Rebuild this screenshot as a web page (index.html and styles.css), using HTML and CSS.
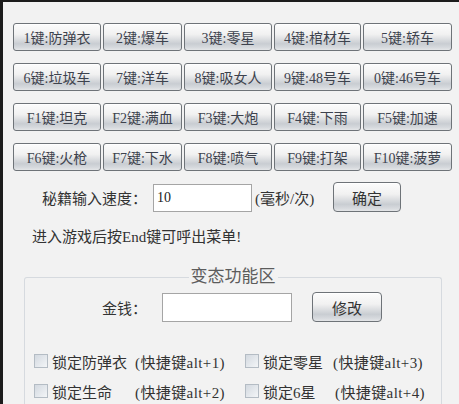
FILE: index.html
```html
<!doctype html>
<html>
<head>
<meta charset="utf-8">
<title>秘籍</title>
<link rel="stylesheet" href="styles.css">
</head>
<body>

<div class="window">

<div class="keys">
<button class="key">1键:防弹衣</button>
<button class="key">2键:爆车</button>
<button class="key">3键:零星</button>
<button class="key">4键:棺材车</button>
<button class="key">5键:轿车</button>
<button class="key">6键:垃圾车</button>
<button class="key">7键:洋车</button>
<button class="key">8键:吸女人</button>
<button class="key">9键:48号车</button>
<button class="key">0键:46号车</button>
<button class="key">F1键:坦克</button>
<button class="key">F2键:满血</button>
<button class="key">F3键:大炮</button>
<button class="key">F4键:下雨</button>
<button class="key">F5键:加速</button>
<button class="key">F6键:火枪</button>
<button class="key">F7键:下水</button>
<button class="key">F8键:喷气</button>
<button class="key">F9键:打架</button>
<button class="key">F10键:菠萝</button>
</div>

<div class="speed-row">
<span class="speed-label">秘籍输入速度：</span>
<input class="text-box speed-box" type="text" value="10">
<span class="speed-unit">(毫秒/次)</span>
<button class="action">确定</button>
</div>

<div class="hint">进入游戏后按End键可呼出菜单!</div>

<fieldset class="group">
<legend class="group-title">变态功能区</legend>

<div class="money-row">
<span class="money-label">金钱：</span>
<input class="text-box money-box" type="text" value="">
<button class="action money-button">修改</button>
</div>

<div class="locks">
<label class="lock"><span class="check"></span>锁定防弹衣</label>
<span class="shortcut">(快捷键alt+1)</span>
<label class="lock"><span class="check"></span>锁定零星</label>
<span class="shortcut">(快捷键alt+3)</span>
<label class="lock"><span class="check"></span>锁定生命</label>
<span class="shortcut">(快捷键alt+2)</span>
<label class="lock"><span class="check"></span>锁定6星</label>
<span class="shortcut shortcut-late">(快捷键alt+4)</span>
</div>

</fieldset>

</div>

</body>
</html>
```

FILE: styles.css
```css
html, body {
	margin: 0;
	height: 404px;
	overflow: hidden;
}

body {
	font-family: "Liberation Serif", "Noto Sans CJK SC", sans-serif;
	background: #f2f2f2;
	color: #333333;
}

div.window {
	box-sizing: border-box;
	height: 404px;
	overflow: hidden;
	border-top: solid 2px #1c1c1c;
	border-left: solid 3px #1c1c1c;
	padding: 21px 0 0 10px;
	background: #f2f2f2;
}

/* the twenty cheat buttons */
div.keys {
	display: grid;
	grid-template-columns: 88px 79px 88px 87px 89px;
	grid-auto-rows: 28px;
	column-gap: 2px;
	row-gap: 12px;
}

button.key, button.action {
	margin: 0;
	padding: 0;
	border: solid 1px #6e7378;
	border-radius: 3px;
	background: linear-gradient(#fcfcfc 0%, #f1f1f1 40%, #c9cdd2 76%, #d6d9dd 90%, #e4e6e8 100%);
	box-shadow: inset 0 1px 0 #ffffff;
	font-family: "Liberation Serif", "Noto Sans CJK SC", sans-serif;
	font-size: 14px;
	color: #3d424d;
	white-space: nowrap;
}

button.action {
	width: 68px;
	height: 30px;
	border-radius: 4px;
	font-size: 15px;
	color: #333333;
}

input.text-box {
	box-sizing: border-box;
	margin: 0;
	border: solid 1px #a5a5a5;
	background: #ffffff;
	padding: 0 3px;
	font-family: "Liberation Serif", "Noto Sans CJK SC", sans-serif;
	font-size: 14px;
	color: #222222;
	outline: none;
}

div.speed-row {
	display: flex;
	align-items: center;
	height: 30px;
	margin-top: 11px;
	padding-left: 29px;
	font-size: 15px;
}

span.speed-label {
	width: 111px;
}

input.speed-box {
	width: 99px;
	height: 28px;
	margin-top: 1px;
}

span.speed-unit {
	width: 78px;
	margin-left: 3px;
}

div.hint {
	margin-top: 15px;
	margin-left: 19px;
	line-height: 20px;
	font-size: 15px;
}

/* the group box, cut off by the bottom of the window */
fieldset.group {
	box-sizing: border-box;
	width: 418px;
	height: 137px;
	margin: 20px 0 0 11px;
	padding: 0;
	border: solid 1px #d6dadf;
	border-bottom: none;
	border-radius: 3px 3px 0 0;
}

legend.group-title {
	margin-left: auto;
	margin-right: auto;
	padding: 0 2px;
	line-height: 20px;
	font-size: 17px;
	color: #5c5c5c;
}

div.money-row {
	display: flex;
	align-items: center;
	height: 30px;
	margin-top: 5px;
	padding-left: 77px;
	font-size: 15px;
}

span.money-label {
	width: 60px;
}

input.money-box {
	width: 130px;
	height: 29px;
}

button.money-button {
	width: 70px;
	margin-left: 20px;
}

div.locks {
	display: grid;
	grid-template-columns: 101px 110px 88px auto;
	grid-auto-rows: 30px;
	align-items: center;
	margin-top: 24px;
	padding-left: 9px;
	font-size: 15px;
}

label.lock {
	display: flex;
	align-items: center;
	gap: 4px;
}

span.check {
	box-sizing: border-box;
	width: 14px;
	height: 14px;
	border: solid 1px #b4bcc4;
	background: linear-gradient(135deg, #d3d9e0, #f3f5f7);
}

span.shortcut {
	letter-spacing: 0.4px;
	color: #333333;
}

span.shortcut-late {
	padding-left: 2px;
}
```
